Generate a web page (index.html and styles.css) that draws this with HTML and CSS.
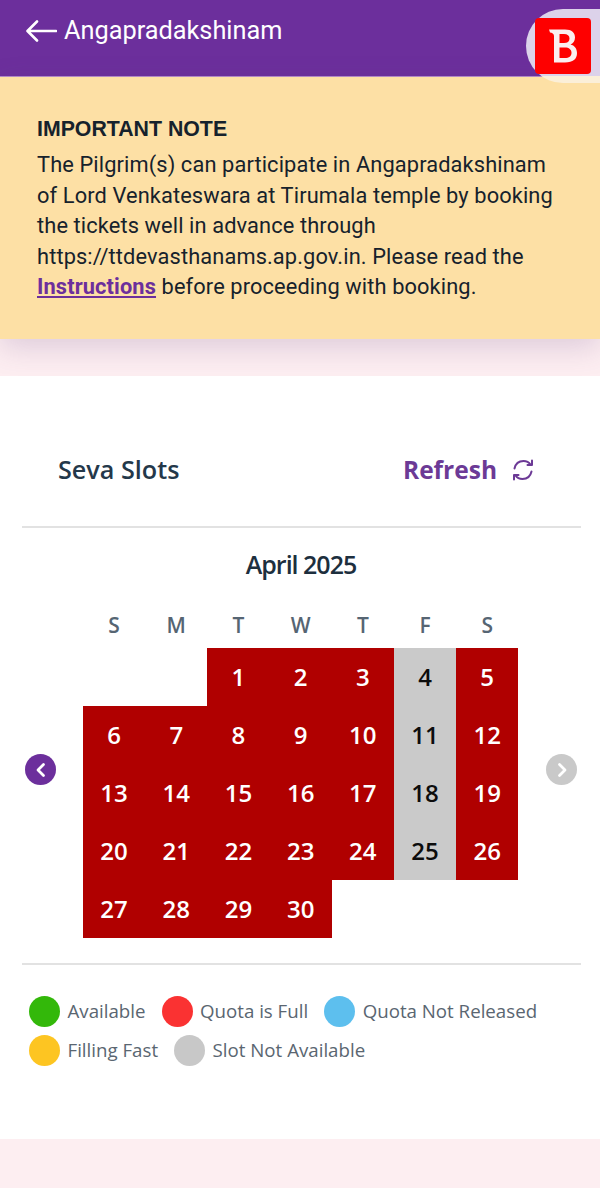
FILE: index.html
```html
<!DOCTYPE html>
<html lang="en">
<head>
<meta charset="utf-8">
<title>Angapradakshinam</title>
<link rel="stylesheet" href="styles.css">
</head>
<body>
<header class="topbar">
  <svg class="back" width="32" height="24" viewBox="0 0 32 24"><path d="M31 12H3M12 2.500 2.500 12 12 21.500" fill="none" stroke="#fff" stroke-width="2.600" stroke-linecap="round" stroke-linejoin="round"/></svg>
  <h1 class="title">Angapradakshinam</h1>
</header>
<div class="bubble">
  <div class="logo">
    <svg width="28" height="34" viewBox="0 0 28 34"><path d="M0 .5H16C23 .5 26 4 26 8.500 26 12 24 14.500 21.500 15.500 25.500 16.500 28 19.500 28 24 28 30 24 33.500 16 33.500H5V7C5 5 3 3.500 1 3.500Z M10.500 5V14H15C18.500 14 20.500 12.500 20.500 9.500 20.500 6.500 18.500 5 15 5Z M10.500 18.500V29H16C20 29 22.500 27 22.500 23.700 22.500 20.500 20 18.500 16 18.500Z" fill="#fbeef0" fill-rule="evenodd"/></svg>
  </div>
</div>
<section class="note">
  <h2 class="note-title">IMPORTANT NOTE</h2>
  <p class="note-text">The Pilgrim(s) can participate in Angapradakshinam of Lord Venkateswara at Tirumala temple by booking the tickets well in advance through https://ttdevasthanams.ap.gov.in. Please read the <a class="note-link" href="#">Instructions</a> before proceeding with booking.</p>
</section>
<main class="card">
  <div class="slots-head">
    <h2 class="slots-title">Seva Slots</h2>
    <div class="refresh">
      <span>Refresh</span>
      <svg width="24" height="24" viewBox="0 0 24 24" fill="none" stroke="#6c3a96" stroke-width="2" stroke-linecap="round" stroke-linejoin="round"><path d="M3.500 10.500C4.500 6 8 3 12.500 3c3 0 5.500 1.300 7 3.500"/><path d="M20.500 13.500C19.500 18 16 21 11.500 21c-3 0-5.500-1.300-7-3.500"/><path d="M21 2.500V7h-4.500"/><path d="M3 21.500V17h4.500"/></svg>
    </div>
  </div>
  <div class="calendar-panel">
    <h3 class="month">April 2025</h3>
    <div class="calendar-row">
      <button class="nav nav-active" type="button" aria-label="Previous month"><svg width="14" height="16" viewBox="0 0 14 16"><path d="M9.500 2.500 4 8l5.500 5.500" fill="none" stroke="#fff" stroke-width="2.800" stroke-linecap="round" stroke-linejoin="round"/></svg></button>
      <div class="calendar">
        <div class="dow">S</div><div class="dow">M</div><div class="dow">T</div><div class="dow">W</div><div class="dow">T</div><div class="dow">F</div><div class="dow">S</div>
        <div></div><div></div>
        <div class="day full">1</div><div class="day full">2</div><div class="day full">3</div><div class="day none">4</div><div class="day full">5</div>
        <div class="day full">6</div><div class="day full">7</div><div class="day full">8</div><div class="day full">9</div><div class="day full">10</div><div class="day none">11</div><div class="day full">12</div>
        <div class="day full">13</div><div class="day full">14</div><div class="day full">15</div><div class="day full">16</div><div class="day full">17</div><div class="day none">18</div><div class="day full">19</div>
        <div class="day full">20</div><div class="day full">21</div><div class="day full">22</div><div class="day full">23</div><div class="day full">24</div><div class="day none">25</div><div class="day full">26</div>
        <div class="day full">27</div><div class="day full">28</div><div class="day full">29</div><div class="day full">30</div>
      </div>
      <button class="nav nav-off" type="button" aria-label="Next month"><svg width="14" height="16" viewBox="0 0 14 16"><path d="M4.500 2.500 10 8l-5.500 5.500" fill="none" stroke="#fff" stroke-width="2.800" stroke-linecap="round" stroke-linejoin="round"/></svg></button>
    </div>
  </div>
  <div class="legend">
    <div class="legend-row">
      <span class="legend-item"><i class="dot green"></i>Available</span>
      <span class="legend-item"><i class="dot red"></i>Quota is Full</span>
      <span class="legend-item"><i class="dot blue"></i>Quota Not Released</span>
    </div>
    <div class="legend-row">
      <span class="legend-item"><i class="dot amber"></i>Filling Fast</span>
      <span class="legend-item"><i class="dot grey"></i>Slot Not Available</span>
    </div>
  </div>
</main>
</body>
</html>
```
FILE: styles.css
```css
* { box-sizing: border-box; }
html, body { margin: 0; padding: 0; }
body {
  width: 600px;
  height: 1188px;
  overflow: hidden;
  background: #fdeef1;
  font-family: "Open Sans", sans-serif;
  position: relative;
}
.topbar {
  height: 77px;
  background: #6c2f9c;
  border-bottom: 1px solid #b58cc9;
  display: flex;
  align-items: flex-start;
  padding: 19px 0 0 25px;
  gap: 7px;
  color: #fff;
}
.back { flex: none; }
.title {
  margin: 0;
  font: 400 25.300px/24px Roboto, sans-serif;
}
.bubble {
  position: absolute;
  top: 9px;
  left: 526px;
  width: 74px;
  height: 74px;
  background: linear-gradient(#dcd2ea 0 67px, #fbefd8 67px);
  border-radius: 37px 0 0 37px;
  z-index: 2;
}
.logo {
  position: absolute;
  top: 9px;
  left: 9px;
  width: 56px;
  height: 56px;
  background: #fe0000;
  border-radius: 4px;
  display: flex;
  align-items: center;
  justify-content: center;
}
.note {
  height: 262px;
  background: #fde0a5;
  padding: 39px 37px 0;
  box-shadow: 0 8px 28px rgba(90, 60, 130, 0.2);
  color: #16222c;
  position: relative;
}
.note-title {
  margin: 0 0 8px;
  font: 700 21.300px/26px "Liberation Sans", Arial, sans-serif;
}
.note-text {
  margin: 0;
  font: 400 21.800px/30.600px Roboto, sans-serif;
  letter-spacing: 0.12px;
}
.note-link {
  color: #6c2f9c;
  font-weight: 700;
  text-decoration: underline;
}
.card {
  margin-top: 37px;
  height: 763px;
  background: #fff;
  padding: 0 19px 0 22px;
  position: relative;
}
.slots-head {
  height: 152px;
  border-bottom: 2px solid #e2e2e2;
  display: flex;
  justify-content: space-between;
  padding: 77px 46px 0 36px;
}
.slots-title {
  margin: 0;
  font: 600 25.200px/33px "Open Sans", sans-serif;
  color: #24384a;
}
.refresh {
  display: flex;
  align-items: flex-start;
  gap: 14px;
  font: 700 24.500px/33px "Open Sans", sans-serif;
  color: #6c3a96;
}
.refresh svg { margin-top: 5px; }
.calendar-panel {
  height: 437px;
  border-bottom: 2px solid #e2e2e2;
  padding-top: 19px;
}
.month {
  margin: 0 0 0 -1px;
  text-align: center;
  font: 600 25px/34px "Open Sans", sans-serif;
  letter-spacing: -1px;
  color: #1d2f3e;
}
.calendar-row {
  display: flex;
  align-items: flex-start;
  margin-top: 21px;
}
.calendar {
  display: grid;
  grid-template-columns: repeat(7, 62.200px);
  grid-template-rows: 46px repeat(5, 58px);
  margin: 0 28px 0 52px;
}
.dow {
  display: flex;
  align-items: center;
  justify-content: center;
  font: 600 21px/27px "Open Sans", sans-serif;
  color: #566573;
}
.day {
  display: flex;
  align-items: center;
  justify-content: center;
  font: 600 24px/32px "Open Sans", sans-serif;
}
.full { background: #b00000; color: #fff; }
.none { background: #cacaca; color: #0c0c0c; }
.nav {
  flex: none;
  width: 31px;
  height: 31px;
  border: 0;
  padding: 0;
  margin-top: 152px;
  border-radius: 50%;
  display: flex;
  align-items: center;
  justify-content: center;
}
.nav-active { background: #6c2f9c; margin-left: 3px; margin-right: -25px; }
.nav-off { background: #c9c9c9; }
.legend {
  padding: 30px 0 0 7px;
  display: flex;
  flex-direction: column;
  gap: 7px;
}
.legend-row {
  display: flex;
  gap: 16px;
}
.legend-item {
  display: flex;
  align-items: center;
  gap: 7.500px;
  font: 400 18.700px/32px "Open Sans", sans-serif;
  color: #5a6671;
}
.dot {
  width: 31px;
  height: 31px;
  border-radius: 50%;
  flex: none;
}
.green { background: #33b80a; }
.red { background: #fa3232; }
.blue { background: #5dbfee; }
.amber { background: #fdc522; }
.grey { background: #c8c8c8; }
```
